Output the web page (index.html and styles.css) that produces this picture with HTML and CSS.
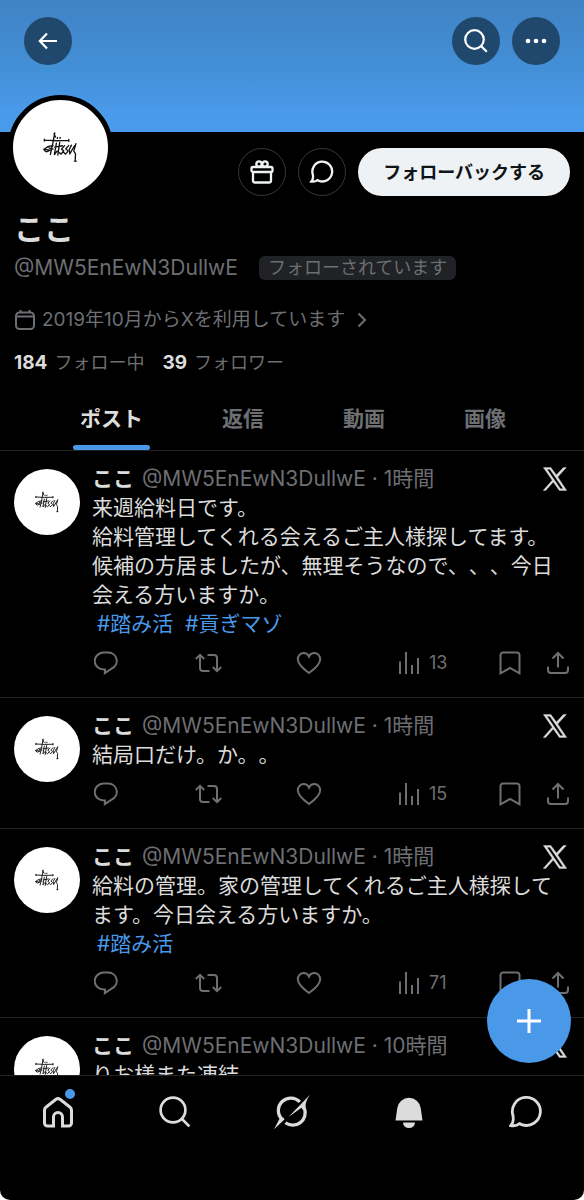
FILE: index.html
```html
<!DOCTYPE html>
<html lang="ja">
<head>
<meta charset="utf-8">
<meta name="viewport" content="width=device-width, initial-scale=1">
<title>ここ (@MW5EnEwN3DullwE)</title>
<link rel="stylesheet" href="styles.css">
</head>
<body>
<svg class="sprite" aria-hidden="true">
  <symbol id="logo" viewBox="128 404 102 92"><g fill="none" stroke="#111" stroke-width="4" stroke-linecap="round" stroke-linejoin="round"><path d="M132 429 170 431 205 430M132 426v6M205 427v6"/><path d="M163 408 157 440 150 472M161 410 165 420"/><path d="M158 446 144 448 130 457 150 459 138 464 132 460M146 452 158 456"/><path d="M168 438 162 472 170 462M178 436 172 474M163 450 186 446"/><path d="M171 421v3M179 421v3" stroke-width="4"/><path d="M192 446 183 456 190 461 182 471 176 466M205 445 196 455 203 462 195 471 190 466"/><path d="M213 444 206 458 208 470 222 446M226 440 220 462 225 470 224 492M222 492h5"/></g></symbol>
  <symbol id="x" viewBox="0 0 24 24"><path d="M.4.6h7.5l5.500 7.500L20.300.6h3L14.700 10l9 13.400h-7.400l-6-8.500-7.600 8.500H.2l9-10.200zM4 2.300l13.300 19.400h3L6.900 2.300z" fill="currentColor" stroke="currentColor" stroke-width=".4" fill-rule="evenodd"/></symbol>
  <symbol id="reply" viewBox="0 0 24 24"><path d="M11 18.500h-.8A9 8.300 0 0 1 9.500 1.600h5A8.600 8.300 0 0 1 18 17.300L10.800 22z"/></symbol>
  <symbol id="repost" viewBox="0 0 28 24"><path d="M.8 8 5 3.800 9.200 8M5 4.500V17a3 3 0 0 0 3 3h6.500M12.500 4H19a3 3 0 0 1 3 3v12.500M17.800 16l4.200 4.200 4.200-4.200"/></symbol>
  <symbol id="heart" viewBox="0 0 26 24"><path d="M13 22C6 17 1.800 12.800 1.800 8.300 1.800 4.800 4.300 2 7.600 2 10 2 12 3.300 13 5.500 14 3.300 16 2 18.400 2c3.300 0 5.800 2.800 5.800 6.300C24.200 12.800 20 17 13 22z"/></symbol>
  <symbol id="views" viewBox="0 0 24 24"><path d="M3 10.500V23M9 1v22M15 14v9M21 7v16"/></symbol>
  <symbol id="bookmark" viewBox="0 0 24 24"><path d="M2.500 22.300V4A2.500 2.500 0 0 1 5 1.500h14A2.500 2.500 0 0 1 21.500 4v18.300L12 17z"/></symbol>
  <symbol id="share" viewBox="0 0 24 24"><path d="M12 16.500V2M6.500 7.500 12 2l5.500 5.500M2 15.500V19a3 3 0 0 0 3 3h14a3 3 0 0 0 3-3v-3.500"/></symbol>
  <symbol id="search" viewBox="0 0 24 24"><circle cx="10.500" cy="10.500" r="9.300"/><path d="m17.200 17.200 5.600 5.600"/></symbol>
  <symbol id="chat" viewBox="0 0 24 24"><path d="M2.900 14.800A9.900 9.900 0 1 1 9 20.900L7.500 20.200C6 21.400 4 22 1.300 21.600 2.500 20.200 3.200 18.500 3 16.500z"/></symbol>
</svg>

<div class="app">
  <header class="banner">
    <button class="round" aria-label="戻る"><svg class="line w20" viewBox="0 0 20 20"><path d="M9 2.500 1.800 10 9 17.500M2 10h17"/></svg></button>
    <div class="banner-tools">
      <button class="round" aria-label="検索"><svg class="line w24"><use href="#search"/></svg></button>
      <button class="round" aria-label="その他"><svg class="w24" viewBox="0 0 24 24" fill="currentColor"><circle cx="4" cy="12" r="2.300"/><circle cx="12" cy="12" r="2.300"/><circle cx="20" cy="12" r="2.300"/></svg></button>
    </div>
  </header>

  <section class="profile">
    <div class="profile-top">
      <div class="avatar avatar-large"><svg class="mark"><use href="#logo"/></svg></div>
      <div class="profile-actions">
        <button class="outline" aria-label="ギフト"><svg class="line w24" viewBox="0 0 24 24"><rect x="1.500" y="7" width="21" height="5" rx="1.500"/><path d="M3 12v8.500a2 2 0 0 0 2 2h14a2 2 0 0 0 2-2V12"/><circle cx="9" cy="4" r="2.700"/><circle cx="15" cy="4" r="2.700"/></svg></button>
        <button class="outline" aria-label="メッセージ"><svg class="line w26"><use href="#chat"/></svg></button>
        <button class="follow">フォローバックする</button>
      </div>
    </div>
    <h1 class="name">ここ</h1>
    <div class="handle-row"><span class="handle">@MW5EnEwN3DullwE</span><span class="badge">フォローされています</span></div>
    <a class="joined" href="#about"><svg class="line w20" viewBox="0 0 20 20"><rect x="1" y="2.500" width="18" height="16.500" rx="3.500"/><path d="M1 6.500h18M5.500 0v3M14.500 0v3"/></svg><span>2019年10月からXを利用しています</span><svg class="line chevron" viewBox="0 0 10 16"><path d="m1.500 1.500 6.500 6.500-6.500 6.500"/></svg></a>
    <div class="stats"><a href="#following"><b>184</b>フォロー中</a><a href="#followers"><b>39</b>フォロワー</a></div>
  </section>

  <nav class="tabs">
    <a class="tab tab-on" href="#posts">ポスト</a>
    <a class="tab" href="#replies">返信</a>
    <a class="tab" href="#videos">動画</a>
    <a class="tab" href="#photos">画像</a>
  </nav>

  <main class="feed">
    <article class="post">
      <div class="avatar"><svg class="mark"><use href="#logo"/></svg></div>
      <div class="body">
        <div class="meta"><b>ここ</b><span>@MW5EnEwN3DullwE · 1時間</span><svg class="x"><use href="#x"/></svg></div>
        <p class="text">来週給料日です。<br>給料管理してくれる会えるご主人様探してます。<br>候補の方居ましたが、無理そうなので、、、今日会える方いますか。</p>
        <p class="tags"><a href="#tag1">#踏み活</a><a href="#tag2">#貢ぎマゾ</a></p>
        <div class="actions">
          <div class="counts">
            <button aria-label="返信"><svg class="w24"><use href="#reply"/></svg></button>
            <button aria-label="リポスト"><svg class="w28"><use href="#repost"/></svg></button>
            <button aria-label="いいね"><svg class="w26"><use href="#heart"/></svg></button>
            <button aria-label="表示回数"><svg class="w24"><use href="#views"/></svg>13</button>
          </div>
          <button aria-label="ブックマーク"><svg class="w24"><use href="#bookmark"/></svg></button>
          <button aria-label="共有"><svg class="w24"><use href="#share"/></svg></button>
        </div>
      </div>
    </article>

    <article class="post">
      <div class="avatar"><svg class="mark"><use href="#logo"/></svg></div>
      <div class="body">
        <div class="meta"><b>ここ</b><span>@MW5EnEwN3DullwE · 1時間</span><svg class="x"><use href="#x"/></svg></div>
        <p class="text">結局口だけ。か。。</p>
        <div class="actions">
          <div class="counts">
            <button aria-label="返信"><svg class="w24"><use href="#reply"/></svg></button>
            <button aria-label="リポスト"><svg class="w28"><use href="#repost"/></svg></button>
            <button aria-label="いいね"><svg class="w26"><use href="#heart"/></svg></button>
            <button aria-label="表示回数"><svg class="w24"><use href="#views"/></svg>15</button>
          </div>
          <button aria-label="ブックマーク"><svg class="w24"><use href="#bookmark"/></svg></button>
          <button aria-label="共有"><svg class="w24"><use href="#share"/></svg></button>
        </div>
      </div>
    </article>

    <article class="post">
      <div class="avatar"><svg class="mark"><use href="#logo"/></svg></div>
      <div class="body">
        <div class="meta"><b>ここ</b><span>@MW5EnEwN3DullwE · 1時間</span><svg class="x"><use href="#x"/></svg></div>
        <p class="text">給料の管理。家の管理してくれるご主人様探してます。今日会える方いますか。</p>
        <p class="tags"><a href="#tag1">#踏み活</a></p>
        <div class="actions">
          <div class="counts">
            <button aria-label="返信"><svg class="w24"><use href="#reply"/></svg></button>
            <button aria-label="リポスト"><svg class="w28"><use href="#repost"/></svg></button>
            <button aria-label="いいね"><svg class="w26"><use href="#heart"/></svg></button>
            <button aria-label="表示回数"><svg class="w24"><use href="#views"/></svg>71</button>
          </div>
          <button aria-label="ブックマーク"><svg class="w24"><use href="#bookmark"/></svg></button>
          <button aria-label="共有"><svg class="w24"><use href="#share"/></svg></button>
        </div>
      </div>
    </article>

    <article class="post">
      <div class="avatar"><svg class="mark"><use href="#logo"/></svg></div>
      <div class="body">
        <div class="meta"><b>ここ</b><span>@MW5EnEwN3DullwE · 10時間</span><svg class="x"><use href="#x"/></svg></div>
        <p class="text">りお様また凍結</p>
      </div>
    </article>
  </main>

  <nav class="bottom">
    <button aria-label="ホーム"><svg class="line w34" viewBox="0 0 34 34"><path d="M3.500 15a4 4 0 0 1 1.700-3L15 4.300a3.500 3.500 0 0 1 4 0L28.800 12a4 4 0 0 1 1.700 3v13a3 3 0 0 1-3 3h-6v-9a4.500 4.500 0 0 0-9 0v9h-6a3 3 0 0 1-3-3z"/></svg><i class="dot"></i></button>
    <button aria-label="検索"><svg class="line w30"><use href="#search"/></svg></button>
    <button aria-label="Grok"><svg class="w36" viewBox="820 220 110 110" fill="currentColor"><path d="M899 244A38 38 0 0 0 844 297M913 264A38 38 0 0 1 855 308" fill="none" stroke="currentColor" stroke-width="10"/><path d="M930 222 864 290 904 262 909 270 918 266C914 252 918 240 930 222zM820 328 837 296 849 292 852 298z"/></svg></button>
    <button aria-label="通知"><svg class="w34" viewBox="0 0 34 34" fill="currentColor"><path d="M3.500 25.500 5.300 13a11.800 11.800 0 0 1 23.400 0l1.800 12.500zM11 27.500h12a6 5.500 0 0 1-12 0z"/></svg></button>
    <button aria-label="メッセージ"><svg class="line w34"><use href="#chat"/></svg></button>
    <button class="compose" aria-label="ポストする"><svg class="w24" viewBox="0 0 24 24"><path d="M12 0v24M0 12h24" stroke="currentColor" stroke-width="3"/></svg></button>
  </nav>
</div>
</body>
</html>
```
FILE: styles.css
```css
* {
  box-sizing: border-box;
}

html {
  background: #fff;
}

body {
  margin: 0;
  font-family: Inter, "Noto Sans CJK JP", sans-serif;
  font-size: 21px;
  line-height: 29px;
  text-spacing-trim: space-all;
  color: #dcdcdc;
}

h1,
p {
  margin: 0;
}

a {
  color: inherit;
  text-decoration: none;
}

button {
  display: flex;
  align-items: center;
  justify-content: center;
  padding: 0;
  border: 0;
  background: none;
  color: inherit;
  font: inherit;
  cursor: pointer;
}

svg {
  display: block;
  flex: none;
}

.sprite {
  position: absolute;
  width: 0;
  height: 0;
}

.line {
  fill: none;
  stroke: currentColor;
  stroke-width: 2;
}

.w20 { width: 20px; height: 20px; }
.w24 { width: 24px; height: 24px; }
.w26 { width: 26px; height: 24px; }
.w28 { width: 28px; height: 24px; }
.w30 { width: 32px; height: 32px; }
.w34 { width: 34px; height: 34px; }
.w36 { width: 36px; height: 36px; }

.app {
  display: flex;
  flex-direction: column;
  height: 100vh;
  overflow: hidden;
  background: #000;
  border-radius: 0 0 10px 10px;
}

.banner {
  display: flex;
  justify-content: space-between;
  align-items: flex-start;
  flex: none;
  height: 132px;
  padding: 17px 24px;
  background: linear-gradient(#4083c4, #438fd6 50%, #4a9aea 85%, #4b9bec);
  color: #fff;
}

.banner .line {
  stroke-width: 2.2;
}

.banner-tools {
  display: flex;
  gap: 12px;
}

.round,
.outline {
  width: 48px;
  height: 48px;
  border-radius: 50%;
}

.round {
  background: #20486c;
}

.outline {
  border: 1px solid #353739;
  color: #f0f3f4;
}

.profile {
  flex: none;
  padding: 0 14px;
  color: #6d6f73;
}

.profile-top {
  display: flex;
  justify-content: space-between;
  align-items: flex-end;
  margin-top: -37px;
}

.avatar {
  display: flex;
  align-items: center;
  justify-content: center;
  flex: none;
  width: 66px;
  height: 66px;
  border-radius: 50%;
  background: #fff;
}

.avatar-large {
  width: 105px;
  height: 105px;
  margin-left: -6px;
  border: 5px solid #000;
}

.mark {
  width: 36%;
  height: 36%;
}

.profile-actions {
  display: flex;
  gap: 12px;
  padding-bottom: 4px;
}

.outline .line {
  stroke-width: 2.3;
}

.follow {
  height: 48px;
  padding: 0 25px;
  border-radius: 24px;
  background: #eef2f4;
  color: #0f1419;
  font-size: 18px;
  font-weight: 700;
}

.name {
  margin-top: 9px;
  font-size: 30px;
  line-height: 40px;
  font-weight: 700;
  color: #dcdcdc;
}

.handle-row {
  display: flex;
  align-items: center;
  gap: 21px;
  margin-top: 4px;
}

.badge {
  padding: 0 9px;
  border-radius: 6px;
  background: #202226;
  font-size: 18px;
  line-height: 24px;
}

.joined {
  display: flex;
  align-items: center;
  gap: 7px;
  margin-top: 23px;
  padding-left: 1px;
  font-size: 19px;
}

.chevron {
  width: 10px;
  height: 16px;
  margin-left: 5px;
}

.stats {
  display: flex;
  gap: 18px;
  margin-top: 14px;
  font-size: 18px;
}

.stats b {
  margin-right: 7px;
  font-size: 19px;
  color: #dcdcdc;
}

.tabs {
  display: flex;
  justify-content: space-between;
  flex: none;
  padding: 22px 71px 0 73px;
  border-bottom: 1px solid #202224;
  font-weight: 700;
  color: #6d6f73;
}

.tab {
  padding: 5px 7px 13px;
  border-bottom: 4px solid transparent;
}

.tab-on {
  position: relative;
  color: #dcdcdc;
}

.tab-on::after {
  content: "";
  position: absolute;
  left: 0;
  right: 0;
  bottom: -4px;
  height: 5px;
  border-radius: 3px;
  background: #4a99e9;
}

.feed {
  flex: 1;
  min-height: 0;
  overflow: hidden;
}

.post {
  display: flex;
  gap: 12px;
  padding: 13px 14px 22px;
  border-bottom: 1px solid #202224;
}

.post .avatar {
  margin-top: 5px;
}

.body {
  flex: 1;
  min-width: 0;
}

.meta {
  display: flex;
  gap: 8px;
  color: #6d6f73;
}

.meta b {
  color: #dcdcdc;
}

.x {
  width: 24px;
  height: 24px;
  margin: 3px 3px 0 auto;
  color: #dcdcdc;
}

.tags {
  display: flex;
  gap: 12px;
  padding-left: 5px;
  color: #4a99e9;
}

.actions {
  display: flex;
  gap: 24px;
  margin-top: 13px;
  color: #6d6f73;
  font-size: 18px;
  line-height: 24px;
}

.actions svg {
  fill: none;
  stroke: currentColor;
  stroke-width: 2;
}

.counts {
  display: grid;
  grid-template-columns: repeat(4, 1fr);
  flex: 1;
  margin-right: -24px;
  padding-left: 2px;
}

.counts button {
  justify-content: flex-start;
  gap: 8px;
}

.bottom {
  position: relative;
  display: grid;
  grid-template-columns: repeat(5, 1fr);
  align-items: start;
  flex: none;
  height: 125px;
  padding-top: 18px;
  border-top: 1px solid #202224;
}

.bottom button {
  position: relative;
  height: 36px;
}

.bottom .line {
  stroke-width: 3;
}

.bottom .w30,
.bottom .line.w34:not([viewBox]) {
  stroke-width: 2;
}

.dot {
  position: absolute;
  top: -5px;
  left: calc(50% + 7px);
  width: 10px;
  height: 10px;
  border-radius: 50%;
  background: #4a99e9;
}

.bottom .compose {
  position: absolute;
  right: 13px;
  bottom: 137px;
  width: 84px;
  height: 84px;
  border-radius: 50%;
  background: #4a99e9;
  color: #fff;
}
```
